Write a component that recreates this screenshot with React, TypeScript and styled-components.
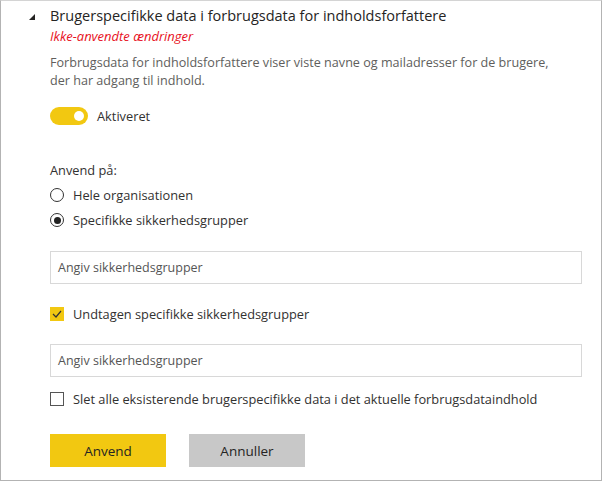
import React from "react";
import styled, { createGlobalStyle } from "styled-components";

const Global = createGlobalStyle`
  html, body { margin: 0; padding: 0; background: #fff; }
  body { font-family: "Open Sans", "Noto Sans", sans-serif; }
  * { box-sizing: border-box; }
`;

const Panel = styled.div`
  width: 602px;
  height: 481px;
  border: 1px solid #b3b3b3;
  border-top-color: #d4d4d4;
  padding: 4px 19px 0 28px;
  display: flex;
  flex-direction: column;
`;

const Header = styled.div`
  display: flex;
  align-items: flex-start;
`;

const Caret = styled.svg`
  width: 6px;
  height: 6px;
  margin-top: 9px;
  margin-right: 15px;
  flex: none;
`;

const HeadText = styled.div`
  display: flex;
  flex-direction: column;
`;

const Title = styled.div`
  font-size: 14.5px;
  line-height: 22px;
  color: #252423;
`;

const Pending = styled.div`
  font-size: 13px;
  line-height: 18px;
  font-style: italic;
  color: #e81123;
`;

const Body = styled.div`
  padding-left: 21px;
  display: flex;
  flex-direction: column;
`;

const Description = styled.p`
  margin: 9px 0 0;
  max-width: 515px;
  font-size: 12.6px;
  line-height: 18px;
  color: #605e5c;
`;

const Row = styled.div<{ $top: number }>`
  display: flex;
  align-items: center;
  gap: 9px;
  margin-top: ${(p) => p.$top}px;
  height: 20px;
`;

const Label = styled.span`
  font-size: 12.8px;
  color: #323130;
`;

const Toggle = styled.div`
  width: 38px;
  height: 18px;
  border-radius: 9px;
  background: #f2c811;
  position: relative;
  flex: none;
  &::after {
    content: "";
    position: absolute;
    right: 4px;
    top: 4px;
    width: 10px;
    height: 10px;
    border-radius: 50%;
    background: #fff;
  }
`;

const SectionLabel = styled.div`
  margin-top: 34px;
  font-size: 12.8px;
  line-height: 20px;
  color: #323130;
`;

const Radio = styled.span<{ $on?: boolean }>`
  width: 14px;
  height: 14px;
  border-radius: 50%;
  border: 1px solid #333;
  display: flex;
  align-items: center;
  justify-content: center;
  flex: none;
  &::after {
    content: "";
    display: ${(p) => (p.$on ? "block" : "none")};
    width: 7px;
    height: 7px;
    border-radius: 50%;
    background: #222;
  }
`;

const Check = styled.span<{ $on?: boolean }>`
  width: 14px;
  height: 14px;
  flex: none;
  display: flex;
  align-items: center;
  justify-content: center;
  background: ${(p) => (p.$on ? "#f2c811" : "#fff")};
  border: 1px solid ${(p) => (p.$on ? "#f2c811" : "#555")};
`;

const Input = styled.div<{ $top: number }>`
  margin-top: ${(p) => p.$top}px;
  height: 33px;
  border: 1px solid #d8d8d8;
  display: flex;
  align-items: center;
  padding-left: 7px;
  font-size: 12.5px;
  color: #555;
`;

const Buttons = styled.div`
  margin-top: 25px;
  display: flex;
  gap: 23px;
`;

const Button = styled.div<{ $primary?: boolean }>`
  width: 116px;
  height: 33px;
  display: flex;
  align-items: center;
  justify-content: center;
  font-size: 13.5px;
  color: #252423;
  background: ${(p) => (p.$primary ? "#f2c811" : "#c8c8c8")};
`;

export default function App() {
  return (
    <>
      <Global />
      <Panel>
        <Header>
          <Caret viewBox="0 0 6 6">
            <polygon points="6,0 6,6 0,6" fill="#252423" />
          </Caret>
          <HeadText>
            <Title>Brugerspecifikke data i forbrugsdata for indholdsforfattere</Title>
            <Pending>Ikke-anvendte ændringer</Pending>
          </HeadText>
        </Header>
        <Body>
          <Description>
            Forbrugsdata for indholdsforfattere viser viste navne og mailadresser for de brugere,
            der har adgang til indhold.
          </Description>
          <Row $top={16}>
            <Toggle />
            <Label>Aktiveret</Label>
          </Row>
          <SectionLabel>Anvend på:</SectionLabel>
          <Row $top={5}>
            <Radio />
            <Label>Hele organisationen</Label>
          </Row>
          <Row $top={5}>
            <Radio $on />
            <Label>Specifikke sikkerhedsgrupper</Label>
          </Row>
          <Input $top={21}>Angiv sikkerhedsgrupper</Input>
          <Row $top={20}>
            <Check $on>
              <svg width="10" height="8" viewBox="0 0 10 8">
                <polyline points="1,4 4,7 9,1" fill="none" stroke="#333" strokeWidth="1.2" />
              </svg>
            </Check>
            <Label>Undtagen specifikke sikkerhedsgrupper</Label>
          </Row>
          <Input $top={20}>Angiv sikkerhedsgrupper</Input>
          <Row $top={12}>
            <Check />
            <Label>Slet alle eksisterende brugerspecifikke data i det aktuelle forbrugsdataindhold</Label>
          </Row>
          <Buttons>
            <Button $primary>Anvend</Button>
            <Button>Annuller</Button>
          </Buttons>
        </Body>
      </Panel>
    </>
  );
}
